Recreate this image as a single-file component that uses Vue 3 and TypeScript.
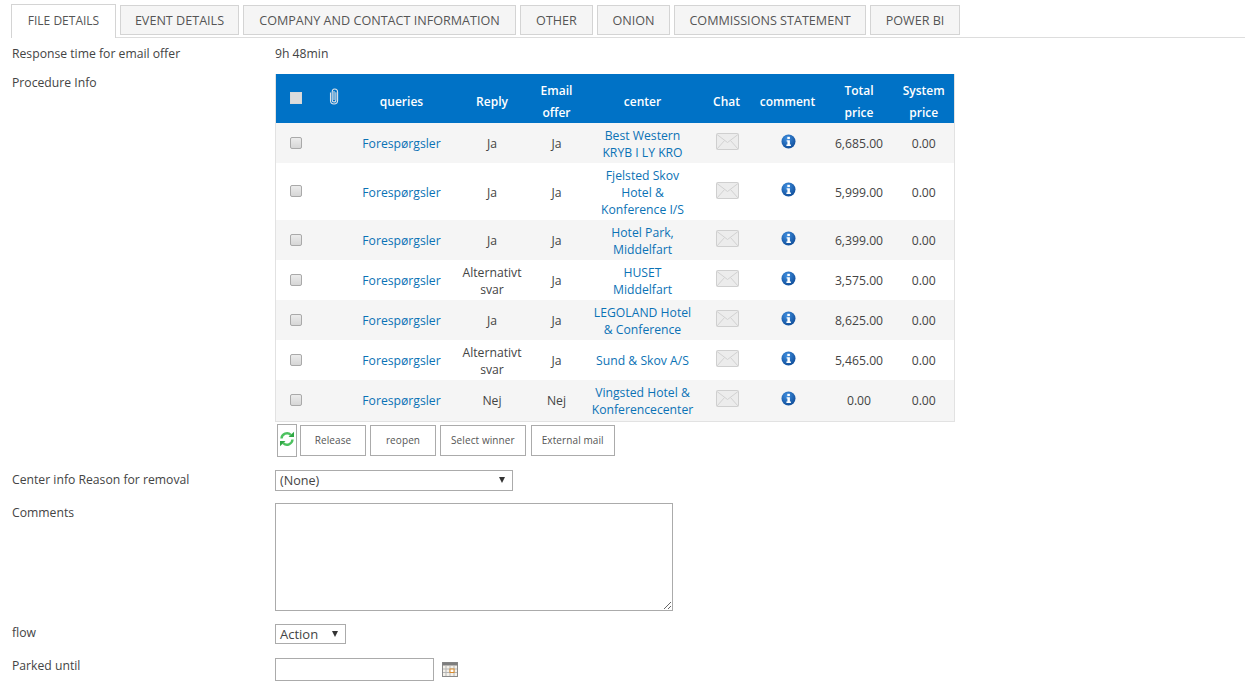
<script setup lang="ts">
interface Row { reply: string[]; email: string; center: string[]; total: string; tall?: boolean }
const tabs: string[] = ['EVENT DETAILS', 'COMPANY AND CONTACT INFORMATION', 'OTHER', 'ONION', 'COMMISSIONS STATEMENT', 'POWER BI']
const rows: Row[] = [
  { reply: ['Ja'], email: 'Ja', center: ['Best Western', 'KRYB I LY KRO'], total: '6,685.00' },
  { reply: ['Ja'], email: 'Ja', center: ['Fjelsted Skov', 'Hotel &', 'Konference I/S'], total: '5,999.00', tall: true },
  { reply: ['Ja'], email: 'Ja', center: ['Hotel Park,', 'Middelfart'], total: '6,399.00' },
  { reply: ['Alternativt', 'svar'], email: 'Ja', center: ['HUSET', 'Middelfart'], total: '3,575.00' },
  { reply: ['Ja'], email: 'Ja', center: ['LEGOLAND Hotel', '& Conference'], total: '8,625.00' },
  { reply: ['Alternativt', 'svar'], email: 'Ja', center: ['Sund & Skov A/S'], total: '5,465.00' },
  { reply: ['Nej'], email: 'Nej', center: ['Vingsted Hotel &', 'Konferencecenter'], total: '0.00' },
]
const actions: string[] = ['Release', 'reopen', 'Select winner', 'External mail']
</script>

<template>
  <div class="page">
    <nav class="tabs">
      <a class="tab active">FILE DETAILS</a>
      <a v-for="t in tabs" :key="t" class="tab">{{ t }}</a>
    </nav>
    <div class="form">
      <div class="row first">
        <div class="label">Response time for email offer</div>
        <div class="value">9h 48min</div>
      </div>
      <div class="row proc">
        <div class="label">Procedure Info</div>
        <div class="value">
          <table class="grid">
            <colgroup>
              <col class="c1" /><col class="c2" /><col class="c3" /><col class="c4" /><col class="c5" />
              <col class="c6" /><col class="c7" /><col class="c8" /><col class="c9" /><col class="c10" />
            </colgroup>
            <thead>
              <tr>
                <th><input type="checkbox" class="cb head-cb" /></th>
                <th>
                  <svg class="clip" width="10" height="17" viewBox="0 0 10 17" fill="none" stroke="#dfe3e8" stroke-width="1.1">
                    <path d="M1.5 4.5 V12.5 Q1.5 16 5 16 Q8.6 16 8.6 12.5 V4 Q8.6 1 5.6 1 Q3.2 1 3.2 4 V12 Q3.2 14 5 14 Q6.900 14 6.900 12 V4.200 M5 3 V12" />
                  </svg>
                </th>
                <th>queries</th>
                <th>Reply</th>
                <th>Email<br />offer</th>
                <th>center</th>
                <th>Chat</th>
                <th>comment</th>
                <th>Total<br />price</th>
                <th>System<br />price</th>
              </tr>
            </thead>
            <tbody>
              <tr v-for="(r, i) in rows" :key="i" :class="{ odd: i % 2 === 0, tall: r.tall }">
                <td><input type="checkbox" class="cb" /></td>
                <td></td>
                <td><a class="link">Forespørgsler</a></td>
                <td class="txt"><template v-for="(p, j) in r.reply" :key="j"><br v-if="j" />{{ p }}</template></td>
                <td class="txt">{{ r.email }}</td>
                <td><a class="link"><template v-for="(p, j) in r.center" :key="j"><br v-if="j" />{{ p }}</template></a></td>
                <td class="icon-cell mail">
                  <svg width="23" height="17" viewBox="0 0 23 17">
                    <rect x="0.5" y="0.5" width="22" height="16" rx="1" fill="#ececec" stroke="#cfcfcf" />
                    <path d="M1 1.5 L11.5 9.5 L22 1.5 M1 16 L8.5 7.5 M22 16 L14.5 7.5" fill="none" stroke="#d2d2d2" />
                  </svg>
                </td>
                <td class="icon-cell info">
                  <svg width="15" height="15" viewBox="0 0 15 15">
                    <defs>
                      <radialGradient id="ig" cx="0.4" cy="0.3" r="0.8">
                        <stop offset="0" stop-color="#3f8fe0" />
                        <stop offset="1" stop-color="#0a4692" />
                      </radialGradient>
                    </defs>
                    <circle cx="7.5" cy="7.5" r="7" fill="url(#ig)" />
                    <rect x="6.3" y="2.8" width="2.6" height="2.3" fill="#fff" />
                    <path d="M5.6 6.2 H8.9 V10.6 H9.900 V12 H5.400 V10.6 H6.400 V7.6 H5.6 Z" fill="#fff" />
                  </svg>
                </td>
                <td class="txt">{{ r.total }}</td>
                <td class="txt">0.00</td>
              </tr>
            </tbody>
          </table>
          <div class="actions">
            <span class="refresh">
              <svg width="16" height="16" viewBox="0 0 16 16" fill="none" stroke="#4cc25f" stroke-width="2.4">
                <path d="M2.5 7.5 A5.500 5.500 0 0 1 11.800 3.900" />
                <path d="M13.500 8.500 A5.500 5.500 0 0 1 4.200 12.100" />
                <path d="M9.500 6 H15 V0.800 Z" fill="#2fa844" stroke="none" />
                <path d="M6.500 10 H1 V15.200 Z" fill="#2fa844" stroke="none" />
              </svg>
            </span>
            <button v-for="a in actions" :key="a" class="btn">{{ a }}</button>
          </div>
        </div>
      </div>
      <div class="row r-reason">
        <div class="label">Center info Reason for removal</div>
        <div class="value">
          <div class="select wide">(None)</div>
        </div>
      </div>
      <div class="row r-comments">
        <div class="label">Comments</div>
        <div class="value"><textarea class="area"></textarea></div>
      </div>
      <div class="row r-flow">
        <div class="label">flow</div>
        <div class="value"><div class="select narrow">Action</div></div>
      </div>
      <div class="row r-parked">
        <div class="label up1">Parked until</div>
        <div class="value dateline">
          <input class="date" type="text" />
          <svg width="16" height="15" viewBox="0 0 16 15">
            <rect x="0.5" y="0.5" width="15" height="14" fill="#f4f1ea" stroke="#8a8a8a" />
            <rect x="0.5" y="0.5" width="15" height="3" fill="#7d7d7d" />
            <path d="M4 4 V14 M8 4 V14 M12 4 V14 M1 7 H15 M1 10.500 H15" stroke="#b5b5b5" stroke-width="1" />
            <rect x="8" y="7" width="4" height="3.500" fill="#fff" stroke="#d98a2b" />
          </svg>
        </div>
      </div>
    </div>
  </div>
</template>

<style scoped>
.page {
  width: 1245px;
  height: 690px;
  overflow: hidden;
  background: #fff;
  font-family: "Open Sans", "Noto Sans", sans-serif;
  font-size: 12.2px;
  color: #444;
  box-sizing: border-box;
}
.tabs {
  display: flex;
  align-items: flex-start;
  gap: 4px;
  height: 38px;
  box-sizing: border-box;
  margin-left: 11px;
  padding-top: 4px;
  border-bottom: 1px solid #ddd;
}
.tab {
  box-sizing: border-box;
  height: 30px;
  margin-top: 1px;
  line-height: 29px;
  text-align: center;
  border: 1px solid #d4d4d4;
  background: #f5f5f5;
  color: #555;
  font-size: 12.6px;
  white-space: nowrap;
}
.tab:nth-child(2) { width: 119px; }
.tab:nth-child(3) { width: 273px; }
.tab:nth-child(4) { width: 73px; }
.tab:nth-child(5) { width: 73px; }
.tab:nth-child(6) { width: 192px; }
.tab:nth-child(7) { width: 90px; }
.tab.active {
  width: 105px;
  height: 34px;
  margin-top: 0;
  background: #fff;
  border-bottom: 0;
  line-height: 31px;
  font-size: 12px;
}
.form {
  padding-left: 12px;
  display: flex;
  flex-direction: column;
}
.row {
  display: flex;
  align-items: flex-start;
}
.label {
  width: 263px;
  flex: none;
  line-height: 18px;
}
.up1 { margin-top: -1px; }
.first { height: 36px; padding-top: 6px; box-sizing: border-box; }
.proc { height: 382px; }
.r-reason { margin-top: 14px; }
.r-reason .label { padding-top: 1px; }
.r-comments { margin-top: 12px; }
.r-comments .label { padding-top: 1px; }
.r-flow { margin-top: 13px; }
.r-parked { margin-top: 14px; }
.value { line-height: 18px; }
.first .value { padding-top: 1px; }
.first .label { padding-top: 1px; }
.grid {
  width: 679px;
  table-layout: fixed;
  border-collapse: collapse;
  border: 1px solid #e2e2e2;
  border-top: 0;
  font-size: 12.2px;
}
.c1 { width: 41px; }
.c2 { width: 33px; }
.c3 { width: 104px; }
.c4 { width: 77px; }
.c5 { width: 52px; }
.c6 { width: 120px; }
.c7 { width: 48px; }
.c8 { width: 74px; }
.c9 { width: 69px; }
.c10 { width: 61px; }
th {
  box-sizing: border-box;
  height: 49px;
  padding: 6px 0 0;
  background: #0072c6;
  color: #fff;
  font-weight: 600;
  font-size: 12px;
  line-height: 21.5px;
  text-align: center;
}
td {
  box-sizing: border-box;
  height: 40px;
  padding: 1px 0 0;
  text-align: center;
  vertical-align: middle;
  line-height: 17px;
  color: #444;
}
tr.tall td { height: 57px; }
tr:last-child td { height: 41px; }
tr.odd td { background: #f5f5f5; }
.link { color: #0b72b5; }
.icon-cell svg { display: block; margin: 0 auto; }
td.icon-cell { padding-left: 2px; }
.mail svg { margin-top: -4px; }
.info svg { margin-top: -5px; }
.cb {
  appearance: none;
  display: block;
  margin: -2px auto 0 auto;
  width: 12px;
  height: 12px;
  box-sizing: border-box;
  border: 1px solid #a9a9a9;
  border-radius: 2px;
  background: linear-gradient(#ececec, #d6d6d6);
}
.head-cb {
  margin-top: -7px;
  border-radius: 0;
  border-color: #d8d8d8;
  background: #dcdcdc;
}
.clip { display: block; margin: -10px 0 0 12px; }
.actions {
  display: flex;
  align-items: center;
  gap: 4px;
  margin-top: 2px;
  margin-left: 2px;
}
.refresh {
  box-sizing: border-box;
  width: 20px;
  height: 33px;
  border: 1px solid #ababab;
  margin-right: -1px;
  display: flex;
  justify-content: center;
  padding-top: 6px;
}
.btn {
  box-sizing: border-box;
  height: 31px;
  min-width: 66px;
  padding: 0 10px;
  margin: 0;
  border: 1px solid #ababab;
  background: #fff;
  color: #555;
  font-family: inherit;
  font-size: 10px;
  letter-spacing: 0.1px;
}
.btn:last-child { margin-left: 1px; min-width: 84px; padding: 0; }
.select {
  position: relative;
  box-sizing: border-box;
  border: 1px solid #ababab;
  background: #fff;
  padding-left: 4px;
  color: #444;
}
.select::after {
  content: "";
  position: absolute;
  top: 6px;
  right: 7px;
  border-left: 3.500px solid transparent;
  border-right: 3.500px solid transparent;
  border-top: 6px solid #333;
}
.wide { width: 238px; height: 21px; line-height: 20px; font-size: 12.6px; }
.narrow { width: 71px; height: 20px; line-height: 19px; font-size: 13px; font-weight: 400; }
.area {
  display: block;
  box-sizing: border-box;
  width: 398px;
  height: 108px;
  border: 1px solid #ababab;
  margin: 0;
  padding: 2px;
  background: #fff;
}
.dateline { display: flex; align-items: center; gap: 8px; }
.date {
  box-sizing: border-box;
  width: 159px;
  height: 23px;
  border: 1px solid #ababab;
  padding: 0;
  margin: 0;
}
</style>
